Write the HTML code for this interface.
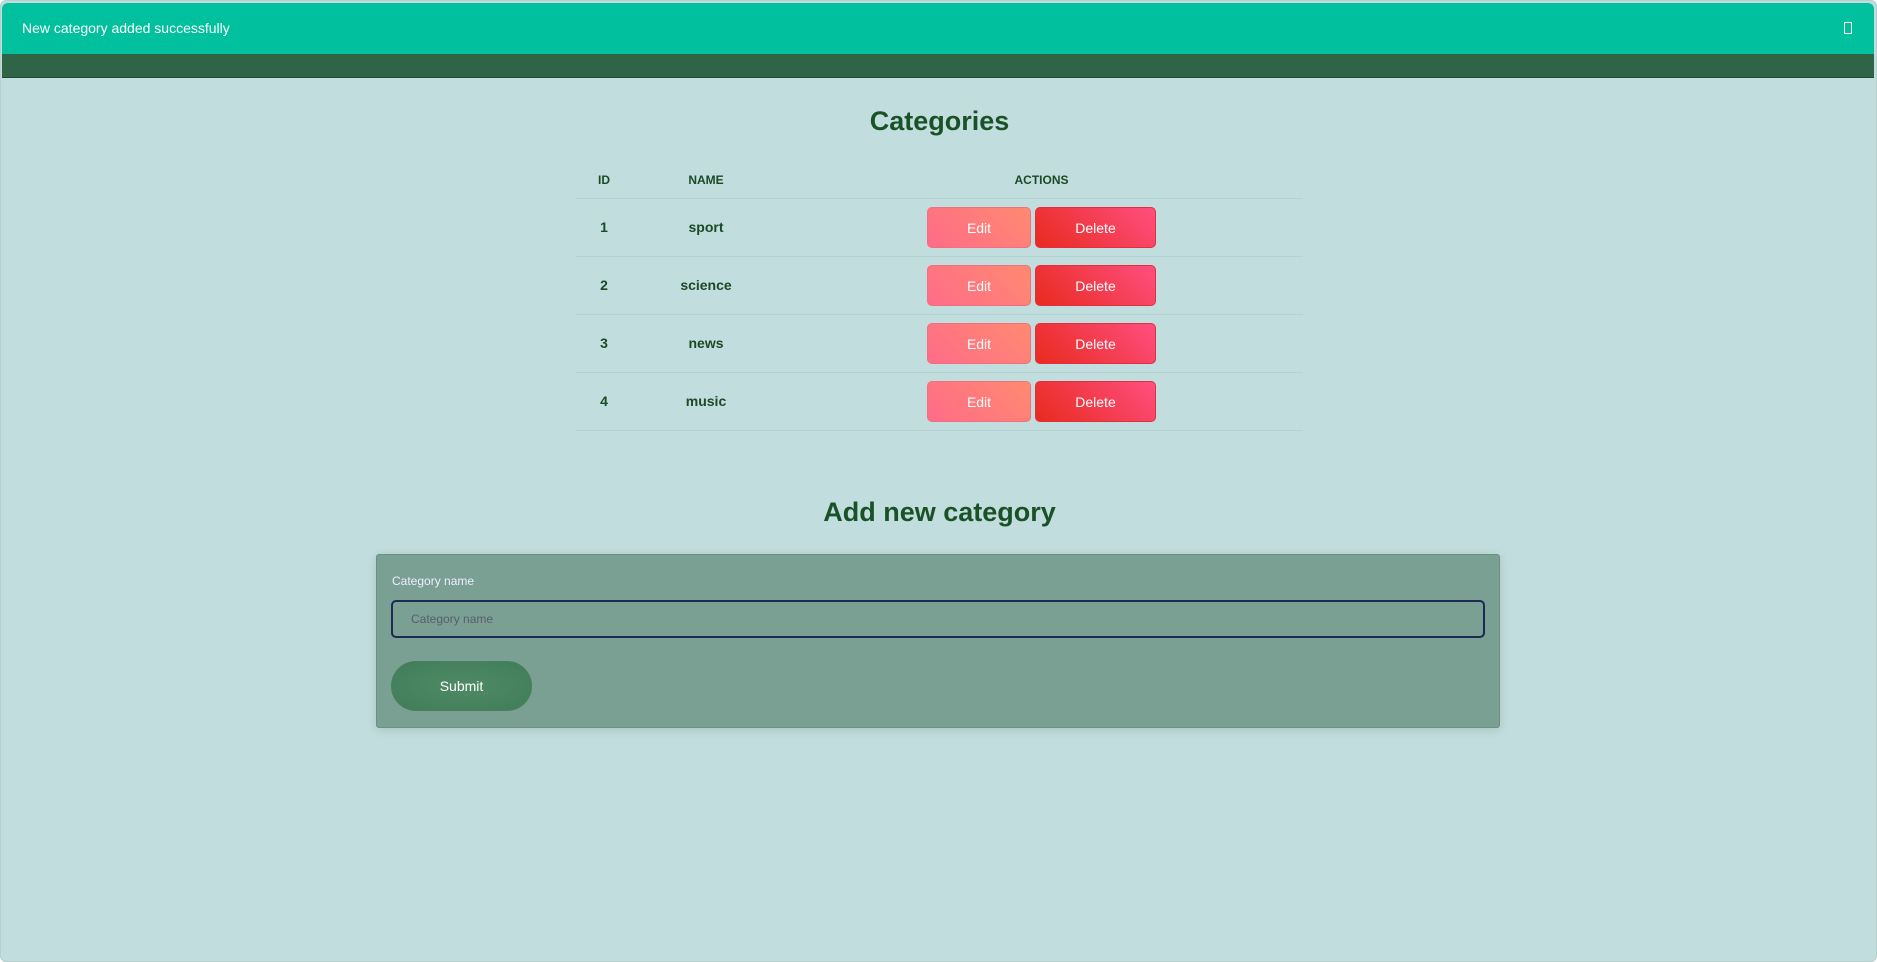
<!DOCTYPE html>
<html><head><meta charset="utf-8"><style>
*{box-sizing:border-box;margin:0;padding:0}
html,body{width:1877px;height:962px;overflow:hidden;background:#fff;font-family:"Liberation Sans",Arial,sans-serif}
.page{position:absolute;left:0;top:0;width:1877px;height:962px;background:#c2dddd;border:1px solid #b8cfcf;border-radius:6px;overflow:hidden}
.alert{position:absolute;left:1px;top:2px;width:1872px;height:51px;background:#00c09d;border-radius:6px 6px 0 0;color:#fff;font-size:14px;line-height:51px;padding-left:20px}
.alert .x{position:absolute;right:22px;top:19px;width:8px;height:12px;border:1px solid #fff}
.bar{position:absolute;left:1px;top:53px;width:1872px;height:24px;background:#306446;border-bottom:1px solid #1f4a30}
h2{position:absolute;left:0;width:1877px;text-align:center;color:#1a5228;font-weight:bold}
table{position:absolute;left:575px;top:162px;width:727px;border-collapse:collapse;color:#1a4a26}
th{font-size:12px;font-weight:bold;height:35px;text-align:center;border-bottom:1px solid #b5d2d2}
td{font-size:14px;font-weight:bold;height:58px;text-align:center;border-bottom:1px solid #b5d2d2}
.btn{display:inline-block;height:41px;line-height:41px;color:#fff;font-size:14px;font-weight:normal;border-radius:5px;vertical-align:middle}
.edit{width:104px;background:linear-gradient(45deg,#ff6b88,#ff8a70);border:1px solid #f07080}
.del{width:121px;margin-left:4px;background:linear-gradient(45deg,#e82a1e,#ff4f80);border:1px solid #e03040}
.form{position:absolute;left:375px;top:553px;width:1124px;height:174px;background:#7a9f93;border:1px solid #6a8f83;border-radius:3px;box-shadow:0 2px 10px rgba(0,0,0,.12)}
.label{position:absolute;left:15px;top:19px;font-size:12px;color:#eef}
.input{position:absolute;left:14px;top:45px;width:1094px;height:38px;border:2px solid #1e2a55;border-radius:5px;font-size:12px;color:#5a5c70;line-height:34px;padding-left:18px}
.submit{position:absolute;left:14px;top:106px;width:141px;height:50px;border-radius:25px;background:radial-gradient(ellipse at center,#4f8a66,#3f7d58);border:1px solid #4a7f5c;color:#fff;font-size:14px;text-align:center;line-height:48px}
</style></head><body>
<div class="page">
<div class="alert">New category added successfully<span class="x"></span></div>
<div class="bar"></div>
<h2 style="top:105px;font-size:27px">Categories</h2>
<table>
<tr><th style="width:56px">ID</th><th style="width:148px">NAME</th><th>ACTIONS</th></tr>
<tr><td>1</td><td>sport</td><td><span class="btn edit">Edit</span><span class="btn del">Delete</span></td></tr>
<tr><td>2</td><td>science</td><td><span class="btn edit">Edit</span><span class="btn del">Delete</span></td></tr>
<tr><td>3</td><td>news</td><td><span class="btn edit">Edit</span><span class="btn del">Delete</span></td></tr>
<tr><td>4</td><td>music</td><td><span class="btn edit">Edit</span><span class="btn del">Delete</span></td></tr>
</table>
<h2 style="top:496px;font-size:27px">Add new category</h2>
<div class="form">
<div class="label">Category name</div>
<div class="input">Category name</div>
<div class="submit">Submit</div>
</div>
</div>
</body></html>
